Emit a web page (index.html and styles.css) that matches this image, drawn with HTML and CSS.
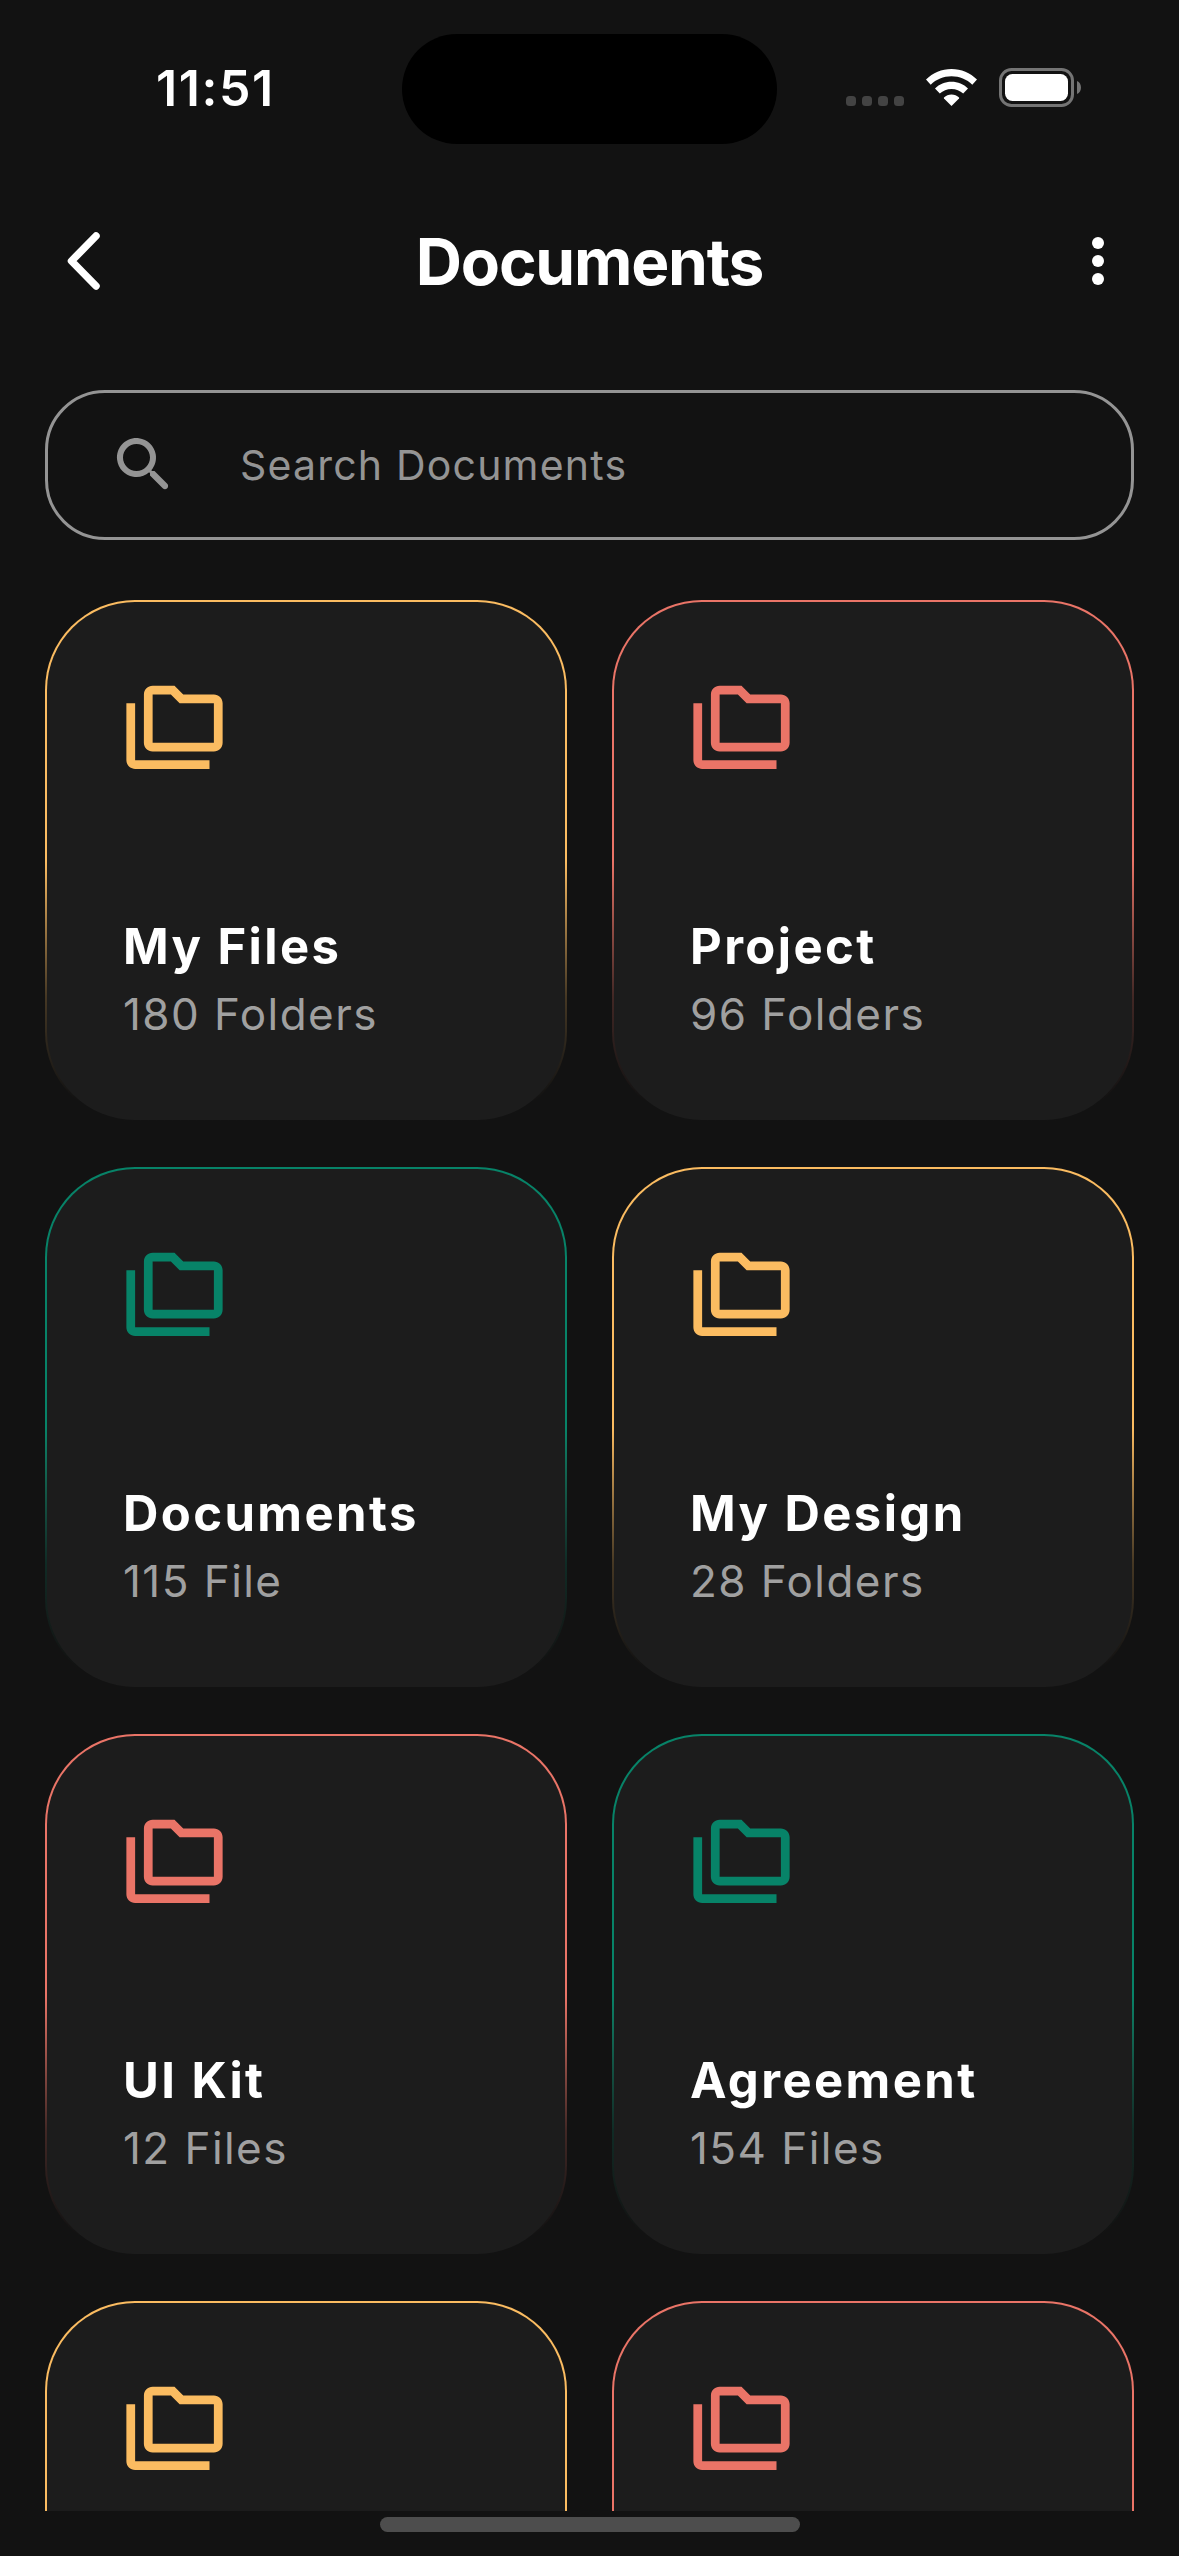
FILE: index.html
```html
<!DOCTYPE html>
<html lang="en">
<head>
<meta charset="utf-8">
<title>Documents</title>
<link rel="stylesheet" href="styles.css">
</head>
<body>
<svg class="sprite" aria-hidden="true">
  <symbol id="folders" viewBox="0 0 24 24">
    <path d="M3 6H1v13c0 1.1.9 2 2 2h17v-2H3V6z"/>
    <path d="M21 4h-7l-2-2H7c-1.1 0-1.99.9-1.99 2L5 15c0 1.1.9 2 2 2h14c1.1 0 2-.9 2-2V6c0-1.1-.9-2-2-2zm0 11H7V4h4.17l2 2H21v9z"/>
  </symbol>
</svg>
<div class="screen">
  <div class="status">
    <div class="time">11:51</div>
    <div class="island"></div>
    <div class="indicators">
      <div class="signal"><i></i><i></i><i></i><i></i></div>
      <svg class="wifi" viewBox="0 0 51 37">
        <path d="M25.500 0C35.300 0 44.200 3.700 51 10.600L46.300 15.700C40.800 10.400 33.600 7.300 25.500 7.300S10.200 10.400 4.700 15.700L0 10.600C6.800 3.700 15.700 0 25.500 0Z"/>
        <path d="M25.500 12.700C31.900 12.700 37.600 15.100 42 19.400L37.200 24.600C34.100 21.700 30 19.900 25.500 19.900S16.900 21.700 13.800 24.600L9 19.400C13.400 15.100 19.100 12.700 25.500 12.700Z"/>
        <path d="M25.500 25.400C28.400 25.400 31 26.500 33 28.400Q33.400 28.900 33 29.400L25.500 37L18 29.400Q17.600 28.900 18 28.400C20 26.500 22.600 25.400 25.500 25.400Z"/>
      </svg>
      <svg class="battery" viewBox="0 0 82 39">
        <rect x="1.500" y="1.500" width="72" height="36" rx="11" fill="none" stroke="#747474" stroke-width="3"/>
        <rect x="6" y="6" width="63" height="27" rx="7.500" fill="#fff"/>
        <path d="M78 13C83.300 15 83.300 24 78 26Z" fill="#747474"/>
      </svg>
    </div>
  </div>

  <header class="bar">
    <svg class="back" viewBox="0 0 34 58"><path d="M29 4L4.500 29L29 54"/></svg>
    <h1>Documents</h1>
    <svg class="more" viewBox="0 0 12 48"><circle cx="6" cy="6" r="6"/><circle cx="6" cy="24" r="6"/><circle cx="6" cy="42" r="6"/></svg>
  </header>

  <div class="search">
    <svg viewBox="0 0 24 24"><path d="M15.500 14h-.79l-.28-.27c1.200-1.400 1.820-3.310 1.480-5.340-.47-2.780-2.790-5-5.590-5.340-4.230-.52-7.790 3.040-7.270 7.270.34 2.800 2.560 5.120 5.340 5.590 2.030.34 3.940-.28 5.340-1.480l.27.28v.79l4.250 4.250c.41.41 1.080.41 1.490 0 .41-.41.41-1.080 0-1.490L15.500 14zm-6 0C7.010 14 5 11.990 5 9.500S7.010 5 9.500 5 14 7.010 14 9.500 11.990 14 9.500 14z"/></svg>
    <span>Search Documents</span>
  </div>

  <main class="grid">
    <article class="card amber"><svg><use href="#folders"/></svg><h2>My Files</h2><p>180 Folders</p></article>
    <article class="card coral"><svg><use href="#folders"/></svg><h2>Project</h2><p>96 Folders</p></article>
    <article class="card green"><svg><use href="#folders"/></svg><h2>Documents</h2><p>115 File</p></article>
    <article class="card amber"><svg><use href="#folders"/></svg><h2>My Design</h2><p>28 Folders</p></article>
    <article class="card coral"><svg><use href="#folders"/></svg><h2>UI Kit</h2><p>12 Files</p></article>
    <article class="card green"><svg><use href="#folders"/></svg><h2>Agreement</h2><p>154 Files</p></article>
    <article class="card amber"><svg><use href="#folders"/></svg></article>
    <article class="card coral"><svg><use href="#folders"/></svg></article>
  </main>

  <footer class="home"><div></div></footer>
</div>
</body>
</html>
```

FILE: styles.css
```css
* { box-sizing: border-box; margin: 0; padding: 0; }

body {
  background: #121212;
  color: #fff;
  font-family: Inter, "Liberation Sans", sans-serif;
}

.sprite { display: none; }

.screen {
  width: 1179px;
  height: 2556px;
  display: flex;
  flex-direction: column;
  overflow: hidden;
}

svg { display: block; flex: none; }

/* Status bar */
.status {
  height: 177px;
  flex: none;
  display: grid;
  grid-template-columns: 402px 375px 402px;
  align-items: start;
}
.time {
  padding: 58px 0 0 156px;
  font-size: 50px;
  line-height: 60px;
  font-weight: 600;
  letter-spacing: 1.6px;
}
.island {
  height: 110px;
  margin-top: 34px;
  border-radius: 55px;
  background: #000;
}
.indicators {
  display: flex;
  padding: 68px 0 0 69px;
}
.signal {
  display: flex;
  gap: 6px;
  padding-top: 28px;
  margin-right: 22px;
}
.signal i { width: 10px; height: 10px; border-radius: 3.5px; background: #434343; }
.wifi { width: 51px; height: 37px; margin-top: 1px; margin-right: 22px; fill: #fff; }
.battery { width: 82px; height: 39px; }

/* App bar */
.bar {
  height: 168px;
  flex: none;
  display: grid;
  grid-template-columns: 1fr auto 1fr;
  align-items: center;
  padding: 0 67px;
}
.back {
  width: 34px;
  height: 58px;
  fill: none;
  stroke: #fff;
  stroke-width: 7.5px;
  stroke-linecap: round;
  stroke-linejoin: round;
}
.more { width: 12px; height: 48px; margin-right: 8px; justify-self: end; fill: #fff; }
h1 {
  padding-top: 2px;
  font-size: 64px;
  line-height: 78px;
  font-weight: 700;
  letter-spacing: -1.2px;
}

/* Search */
.search {
  height: 150px;
  flex: none;
  margin: 45px 45px 0;
  padding-left: 60px;
  display: flex;
  align-items: center;
  border: 3px solid #949494;
  border-radius: 60px;
  color: #949494;
}
.search svg { width: 72px; height: 72px; fill: #949494; }
.search span {
  margin-left: 60px;
  font-size: 41px;
  line-height: 50px;
  letter-spacing: 1.2px;
}

/* Folder grid */
.grid {
  flex: 1;
  min-height: 0;
  margin-top: 60px;
  padding: 0 45px;
  display: grid;
  grid-template-columns: 522px 522px;
  grid-auto-rows: 522px;
  gap: 45px;
  overflow: hidden;
}
.card {
  --tint: #fbbc61;
  padding: 75px;
  border: 2px solid transparent;
  border-radius: 90px;
  background:
    linear-gradient(#1c1c1c, #1c1c1c) padding-box,
    linear-gradient(var(--tint) 50%, color-mix(in srgb, var(--tint) 22%, #121212) 76%, #121212 96%) border-box;
}
.amber { --tint: #fbbc61; }
.coral { --tint: #ea7467; }
.green { --tint: #078368; }
.card svg { width: 105px; height: 105px; fill: var(--tint); }
.card h2 {
  margin: 135px 0 0 1px;
  font-size: 49px;
  line-height: 60px;
  font-weight: 700;
  letter-spacing: 2.4px;
}
.card p {
  margin: 8px 0 0 1px;
  font-size: 44px;
  line-height: 58px;
  letter-spacing: 1.45px;
  color: #a0a0a0;
}

/* Home indicator */
.home {
  height: 45px;
  flex: none;
  display: flex;
  justify-content: center;
  padding-top: 6px;
}
.home div { width: 420px; height: 15px; border-radius: 8px; background: #4d4d4d; }
```
